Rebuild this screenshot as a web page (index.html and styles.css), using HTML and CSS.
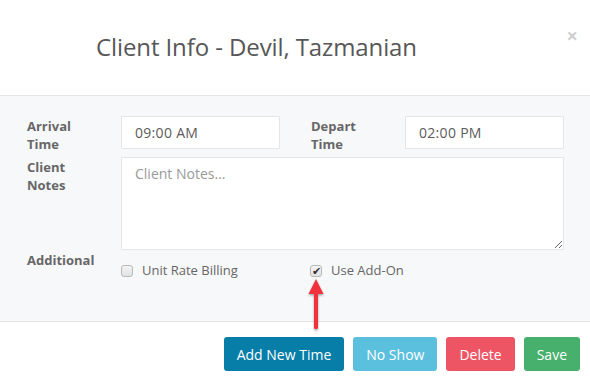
FILE: index.html
```html
<!DOCTYPE html>
<html lang="en">
<head>
  <meta charset="UTF-8">
  <title>Client Info</title>
  <link rel="stylesheet" href="styles.css">
</head>
<body>
  <div class="modal">
    <div class="modal-header">
      <h2 class="modal-title">Client Info - Devil, Tazmanian</h2>
      <span class="close">&times;</span>
    </div>

    <div class="modal-body">
      <div class="form-row times-row">
        <label class="form-label">Arrival<br>Time</label>
        <div class="field"><input class="form-control" type="text" value="09:00 AM"></div>
        <label class="form-label second">Depart<br>Time</label>
        <div class="field"><input class="form-control" type="text" value="02:00 PM"></div>
      </div>

      <div class="form-row notes-row">
        <label class="form-label">Client<br>Notes</label>
        <div class="field wide"><textarea class="form-control notes" placeholder="Client Notes..."></textarea></div>
      </div>

      <div class="form-row">
        <label class="form-label">Additional</label>
        <div class="checks">
          <div class="check"><span class="box"></span>Unit Rate Billing</div>
          <div class="check"><span class="box checked">&#10004;</span>Use Add-On</div>
        </div>
      </div>
    </div>

    <div class="modal-footer">
      <button class="btn btn-blue">Add New Time</button>
      <button class="btn btn-info">No Show</button>
      <button class="btn btn-danger">Delete</button>
      <button class="btn btn-save">Save</button>
    </div>

    <!-- pointer arrow drawn over the form -->
    <svg class="pointer" width="24" height="60" viewBox="0 0 24 60">
      <defs>
        <filter id="shadow" x="-50%" y="-20%" width="200%" height="150%">
          <feDropShadow dx="0" dy="1.5" stdDeviation="1.2" flood-color="#000" flood-opacity="0.35"/>
        </filter>
      </defs>
      <g filter="url(#shadow)">
        <polygon points="12,3 19.5,18 4.5,18" fill="#f0323c"/>
        <rect x="10" y="16" width="4" height="37" rx="1.5" fill="#f0323c"/>
      </g>
    </svg>
  </div>
</body>
</html>
```

FILE: styles.css
```css
* {
  box-sizing: border-box;
}

body {
  margin: 0;
  font-family: 'Open Sans', sans-serif;
  background-color: white;
  color: #666;
}

.modal {
  position: relative;
  width: 590px;
  height: 382px;
}

.modal-header {
  position: relative;
  height: 96px;
  border-bottom: 1px solid #e5e5e5;
  padding: 30px 0 0 96px;
}

.modal-title {
  margin: 0;
  font-size: 24px;
  font-weight: 500;
  line-height: 34px;
  letter-spacing: -0.1px;
  color: #575757;
}

.close {
  position: absolute;
  right: 12px;
  top: 22px;
  font-size: 20px;
  font-weight: bold;
  color: #cfcfcf;
}

.modal-body {
  height: 226px;
  background-color: #f7f8fa;
  border-bottom: 1px solid #e5e5e5;
  padding: 20px 0 0 27px;
}

.form-row {
  display: flex;
  align-items: flex-start;
}

.times-row {
  height: 33px;
}

.form-label {
  width: 94px;
  padding-top: 2px;
  font-size: 13px;
  font-weight: 700;
  line-height: 17.5px;
  color: #676767;
}

.form-label.second {
  width: 125px;
  padding-left: 31px;
}

.field {
  width: 159px;
}

.field.wide {
  width: 443px;
}

.form-control {
  display: block;
  width: 100%;
  height: 33px;
  padding: 6px 13px;
  border: 1px solid #e5e6e7;
  border-radius: 1px;
  background-color: white;
  font-family: 'Open Sans', sans-serif;
  font-size: 14px;
  color: #5c5c5c;
  letter-spacing: 0.3px;
}

.notes {
  height: 93px;
  resize: vertical;
}

.notes::placeholder {
  color: #999;
  letter-spacing: 0;
}

.notes-row {
  margin-top: 8px;
}

.checks {
  display: flex;
  padding-top: 12px;
}

.check {
  display: flex;
  align-items: center;
  width: 189px;
  font-size: 13px;
  line-height: 17.5px;
  color: #666;
}

.box {
  display: inline-flex;
  align-items: center;
  justify-content: center;
  width: 12px;
  height: 12px;
  margin-right: 9px;
  border: 1px solid #b9b9b9;
  border-radius: 3px;
  background: linear-gradient(#f4f4f4, #e2e2e2);
  font-size: 11px;
  line-height: 1;
  color: #333;
}

.modal-footer {
  display: flex;
  justify-content: flex-end;
  gap: 9px;
  padding: 15px 10px 0 0;
}

.btn {
  height: 34px;
  padding: 0 13px;
  border: none;
  border-radius: 3px;
  font-family: 'Open Sans', sans-serif;
  font-size: 14px;
  color: white;
}

.btn-blue { background-color: #077ea7; }
.btn-info { background-color: #5bc0de; }
.btn-danger { background-color: #ed5565; }
.btn-save { background-color: #46b06c; }

.pointer {
  position: absolute;
  left: 304px;
  top: 276px;
}
```
